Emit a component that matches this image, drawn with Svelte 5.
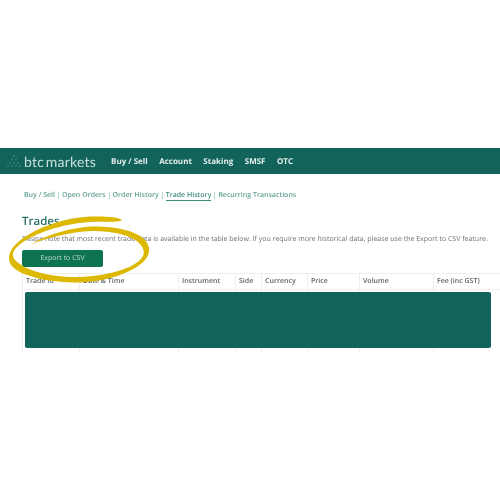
<script>
  const subnav = ['Buy / Sell', 'Open Orders', 'Order History', 'Trade History', 'Recurring Transactions'];
  const nav = ['Buy / Sell', 'Account', 'Staking', 'SMSF', 'OTC'];
  const cols = ['Trade Id', 'Date & Time', 'Instrument', 'Side', 'Currency', 'Price', 'Volume', 'Fee (inc GST)'];
  const dots = [[14,156],[12,159.5],[16,159.5],[10,163],[14,163],[18,163],[8,166],[12,166],[16,166],[20,166]];
</script>

<div class="page">
  <header class="nav">
    <svg class="mark" width="24" height="26" viewBox="0 0 24 26" aria-hidden="true">
      {#each dots as d}
        <circle cx={d[0]} cy={d[1] - 148} r="1" fill="#2f8372" />
      {/each}
    </svg>
    <span class="logo">btc markets</span>
    <nav class="links">
      {#each nav as n}<span>{n}</span>{/each}
    </nav>
  </header>

  <main class="content">
    <div class="subnav">
      {#each subnav as s, i}
        {#if i > 0}<i class="sep"></i>{/if}
        <span class:active={s === 'Trade History'}>{s}</span>
      {/each}
    </div>
    <h1>Trades</h1>
    <p>Please note that most recent trade data is available in the table below. If you require more historical data, please use the Export to CSV feature.</p>
    <button>Export to CSV</button>
    <div class="table">
      <div class="head">
        {#each cols as c}<div class="th">{c}</div>{/each}
      </div>
      <div class="body">
        {#each cols as c}<div class="td"></div>{/each}
        <div class="mask"></div>
      </div>
    </div>
  </main>

  <svg class="ring" width="500" height="500" viewBox="0 0 500 500" aria-hidden="true">
    <path fill="#dcb800" d="M122 220 C119 217 105 216 90 216.500 C62 218 32 229 16 244 C9 251 7 258 11 265 C18 275 45 282 75 282.500 C105 282.500 133 273 145 260 C151 253 150 246 145 240 C135 230 113 226 92 226.500 C68 228 44 236 32 244 C46 238 70 232 92 231 C113 231 132 235 140 244 C145 250 145 255 140 260 C130 270 102 277 75 277 C48 277 24 270 15 260 C11 255 13 250 19 245 C34 233 62 224 90 222 C103 221 118 223 122 220 Z" />
  </svg>
</div>

<style>
  :global(body) { margin: 0; background: #fff; }
  .page {
    position: relative;
    width: 500px;
    height: 500px;
    padding-top: 148px;
    box-sizing: border-box;
    overflow: hidden;
    font-family: "Open Sans", sans-serif;
    text-rendering: geometricPrecision;
    filter: blur(0.3px);
  }
  .nav {
    height: 26px;
    background: #12635a;
    display: flex;
    align-items: center;
    position: relative;
  }
  .mark { flex: none; }
  .logo {
    font-family: Lato, sans-serif;
    font-weight: 400;
    font-size: 14px;
    color: #c6e0da;
    letter-spacing: 0.2px;
    word-spacing: -2px;
    width: 87px;
    white-space: nowrap;
  }
  .links {
    display: flex;
    gap: 11.500px;
    font-size: 8px;
    font-weight: 700;
    color: #e6f0ee;
  }
  .content { padding: 16px 0 0 22px; }
  .subnav {
    display: flex;
    align-items: center;
    gap: 3px;
    margin-left: 2px;
    font-size: 7px;
    font-weight: 600;
    color: #5f9f93;
    height: 11px;
  }
  .subnav .active { border-bottom: 1px solid #3f8a7d; color: #3f8a7d; line-height: 9px; }
  .sep { width: 1px; height: 7px; background: #bcd6d0; }
  h1 {
    margin: 13px 0 0;
    font-size: 11.500px;
    line-height: 16px;
    font-weight: 600;
    color: #2a7166;
  }
  p {
    margin: 4px 0 0;
    font-size: 7px;
    line-height: 11px;
    color: #707070;
    white-space: nowrap;
  }
  button {
    display: block;
    margin: 5px 0 0;
    width: 81px;
    height: 17px;
    padding: 0;
    border: 0;
    border-radius: 2px;
    background: #0e7350;
    color: #c4dcd3;
    font: 400 7px "Open Sans", sans-serif;
    text-rendering: geometricPrecision;
  }
  .table { margin-top: 6px; width: 478px; height: 79px; border-top: 1px solid #eee; }
  .head, .body {
    display: grid;
    grid-template-columns: 57px 99px 57px 26px 46px 52px 74px 67px;
    border-left: 1px solid #eee;
  }
  .head { height: 15px; border-bottom: 1px solid #eee; }
  .th {
    border-right: 1px solid #eee;
    padding-left: 3px;
    font-size: 7px;
    font-weight: 600;
    line-height: 15px;
    color: #5a6462;
    white-space: nowrap;
  }
  .body { position: relative; height: 63px; }
  .td { border-right: 1px solid #eee; }
  .mask {
    position: absolute;
    left: 2px;
    top: 2px;
    width: 466px;
    height: 56px;
    border-radius: 2px;
    background: #12635a;
  }
  .ring { position: absolute; left: 0; top: 0; pointer-events: none; }
</style>
